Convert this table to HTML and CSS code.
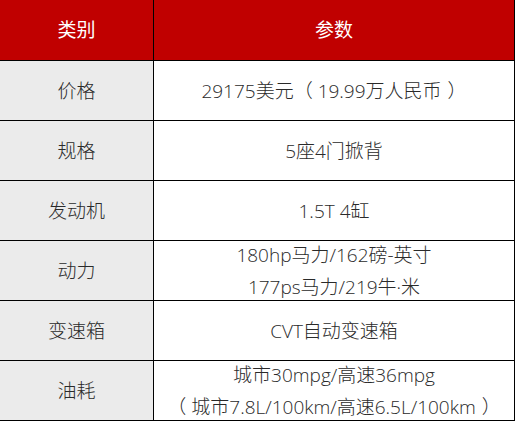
FILE: index.html
```html
<!DOCTYPE html>
<html lang="zh-CN">
<head>
<meta charset="utf-8">
<link rel="stylesheet" href="styles.css">
</head>
<body>
<div class="spec">
  <div class="cell head cat">类别</div><div class="cell head val">参数</div>
  <div class="cell cat">价格</div><div class="cell val"><span>29175美元<span class="po">（</span>19.99万人民币<span class="pc">）</span></span></div>
  <div class="cell cat">规格</div><div class="cell val">5座4门掀背</div>
  <div class="cell cat">发动机</div><div class="cell val">1.5T 4缸</div>
  <div class="cell cat">动力</div><div class="cell val"><span>180hp马力/162磅-英寸<br>177ps马力/219牛·米</span></div>
  <div class="cell cat">变速箱</div><div class="cell val">CVT自动变速箱</div>
  <div class="cell cat">油耗</div><div class="cell val"><span>城市30mpg/高速36mpg<br><span class="po">（</span>城市7.8L/100km/高速6.5L/100km<span class="pc">）</span></span></div>
</div>
</body>
</html>
```
FILE: styles.css
```css
html, body {
  margin: 0;
  padding: 0;
  background: #ffffff;
}
.spec {
  display: grid;
  grid-template-columns: 154px 361px;
  grid-template-rows: 61px repeat(6, 60px);
  width: 515px;
  font-family: "Open Sans", "Noto Sans CJK SC", sans-serif;
  font-size: 19px;
  font-weight: 300;
  color: #2a2a2a;
}
.cell {
  box-sizing: border-box;
  display: flex;
  align-items: center;
  justify-content: center;
  text-align: center;
  border-bottom: 1px solid #000;
  line-height: 32px;
  white-space: nowrap;
}
.cell.cat {
  background: #ebebeb;
  border-right: 1px solid #000;
}
.cell.val {
  background: #ffffff;
  border-right: 1px solid #000;
}
.cell.head {
  background: #c00000;
  color: #ffffff;
  font-weight: 400;
}
.po {
  display: inline-block;
  margin-right: 5px;
}
.pc {
  display: inline-block;
  margin-left: 6px;
}
```
